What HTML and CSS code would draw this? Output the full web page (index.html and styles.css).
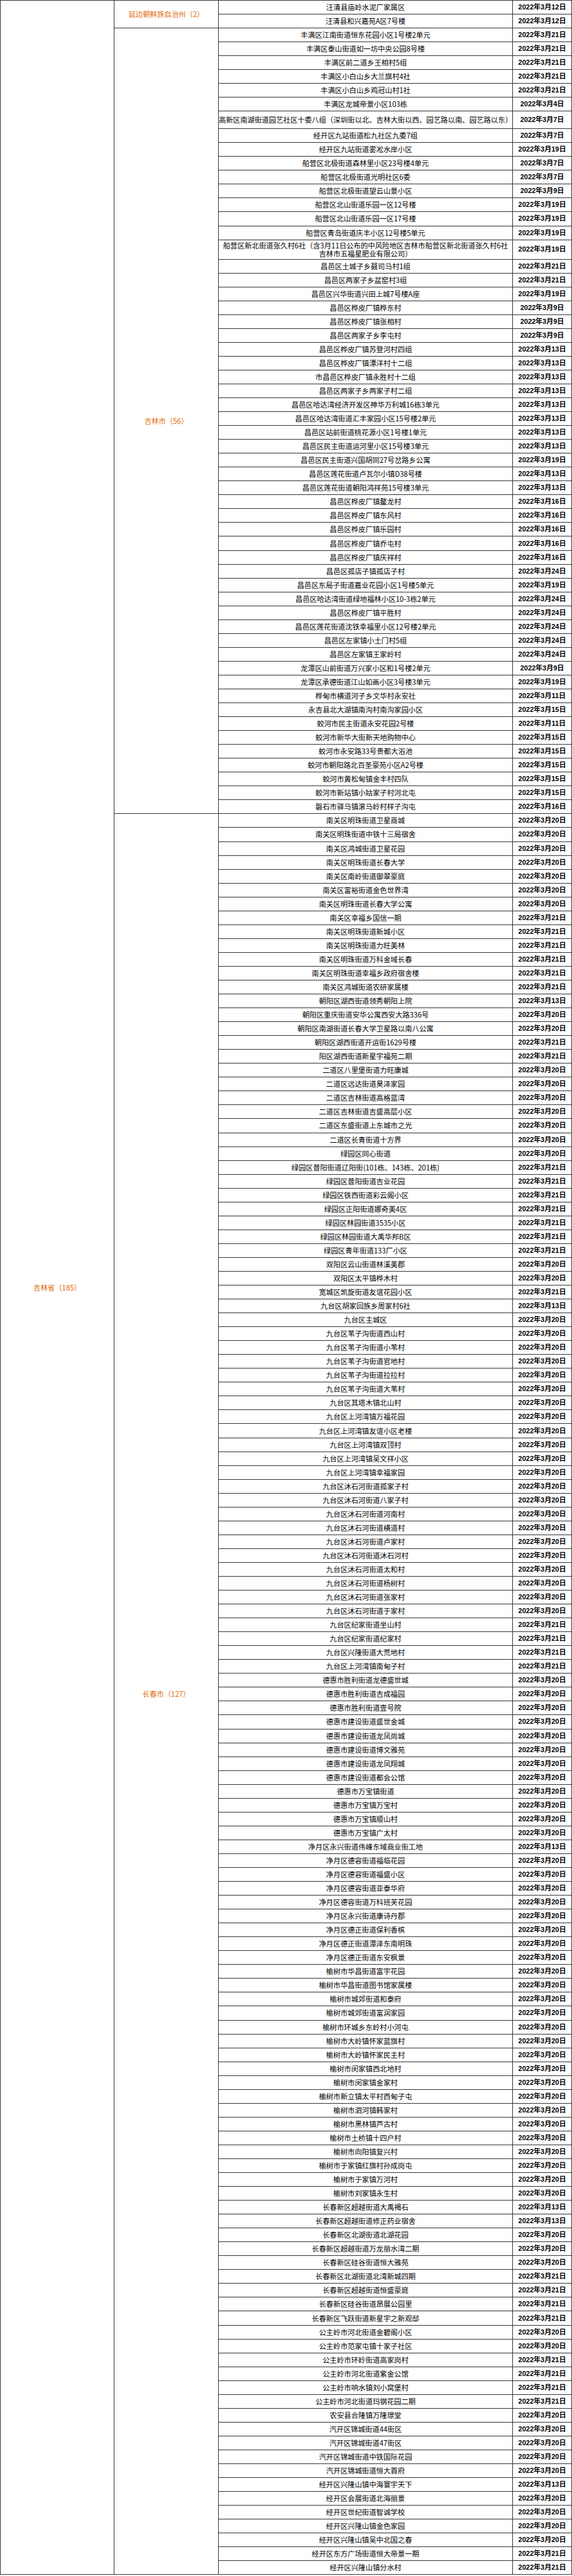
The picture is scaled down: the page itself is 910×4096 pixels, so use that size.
FILE: index.html
```html
<!DOCTYPE html>
<html lang="zh-CN">
<head>
<meta charset="utf-8">
<title>吉林省风险地区</title>
<link rel="stylesheet" href="styles.css">
</head>
<body>
<table class="sheet">
<colgroup><col class="c-prov"><col class="c-city"><col class="c-addr"><col class="c-date"></colgroup>
<tbody>
<tr><td class="label prov" rowspan="185">吉林省（185）</td><td class="label city-top" rowspan="2">延边朝鲜族自治州（2）</td><td>汪清县庙岭水泥厂家属区</td><td class="date">2022年3月12日</td></tr>
<tr><td>汪清县和兴嘉苑A区7号楼</td><td class="date">2022年3月12日</td></tr>
<tr><td class="label" rowspan="56">吉林市（56）</td><td>丰满区江南街道恒东花园小区1号楼2单元</td><td class="date">2022年3月21日</td></tr>
<tr><td>丰满区泰山街道如一坊中央公园8号楼</td><td class="date">2022年3月21日</td></tr>
<tr><td>丰满区前二道乡王相村5组</td><td class="date">2022年3月21日</td></tr>
<tr><td>丰满区小白山乡大兰旗村4社</td><td class="date">2022年3月21日</td></tr>
<tr><td>丰满区小白山乡鸡冠山村1社</td><td class="date">2022年3月21日</td></tr>
<tr><td>丰满区龙城帝景小区103栋</td><td class="date">2022年3月4日</td></tr>
<tr class="row-wide"><td class="nowrap">高新区南湖街道园艺社区十委八组（深圳街以北、吉林大街以西、园艺路以南、园艺路以东）</td><td class="date">2022年3月7日</td></tr>
<tr><td>经开区九站街道松九社区九委7组</td><td class="date">2022年3月7日</td></tr>
<tr><td>经开区九站街道雾凇水岸小区</td><td class="date">2022年3月19日</td></tr>
<tr><td>船营区北极街道森林里小区23号楼4单元</td><td class="date">2022年3月7日</td></tr>
<tr><td>船营区北极街道光明社区6委</td><td class="date">2022年3月7日</td></tr>
<tr><td>船营区北极街道望云山景小区</td><td class="date">2022年3月9日</td></tr>
<tr><td>船营区北山街道乐园一区12号楼</td><td class="date">2022年3月19日</td></tr>
<tr><td>船营区北山街道乐园一区17号楼</td><td class="date">2022年3月19日</td></tr>
<tr><td>船营区青岛街道庆丰小区12号楼5单元</td><td class="date">2022年3月19日</td></tr>
<tr class="row-double"><td>船营区新北街道张久村6社（含3月11日公布的中风险地区吉林市船营区新北街道张久村6社吉林市五福星肥业有限公司）</td><td class="date">2022年3月19日</td></tr>
<tr><td>昌邑区土城子乡聂司马村1组</td><td class="date">2022年3月21日</td></tr>
<tr><td>昌邑区两家子乡盆窑村3组</td><td class="date">2022年3月21日</td></tr>
<tr><td>昌邑区兴华街道兴田上城7号楼A座</td><td class="date">2022年3月19日</td></tr>
<tr><td>昌邑区桦皮厂镇桦东村</td><td class="date">2022年3月9日</td></tr>
<tr><td>昌邑区桦皮厂镇张相村</td><td class="date">2022年3月9日</td></tr>
<tr><td>昌邑区两家子乡李屯村</td><td class="date">2022年3月9日</td></tr>
<tr><td>昌邑区桦皮厂镇苏登河村四组</td><td class="date">2022年3月13日</td></tr>
<tr><td>昌邑区桦皮厂镇漂洋村十二组</td><td class="date">2022年3月13日</td></tr>
<tr><td>市昌邑区桦皮厂镇永胜村十二组</td><td class="date">2022年3月13日</td></tr>
<tr><td>昌邑区两家子乡两家子村二组</td><td class="date">2022年3月13日</td></tr>
<tr><td>昌邑区哈达湾经济开发区神华万利城16栋3单元</td><td class="date">2022年3月13日</td></tr>
<tr><td>昌邑区哈达湾街道汇丰家园小区15号楼2单元</td><td class="date">2022年3月13日</td></tr>
<tr><td>昌邑区站前街道桃花源小区1号楼1单元</td><td class="date">2022年3月13日</td></tr>
<tr><td>昌邑区民主街道运河里小区15号楼3单元</td><td class="date">2022年3月13日</td></tr>
<tr><td>昌邑区民主街道兴国胡同27号岔路乡公寓</td><td class="date">2022年3月19日</td></tr>
<tr><td>昌邑区莲花街道卢瓦尔小镇D38号楼</td><td class="date">2022年3月13日</td></tr>
<tr><td>昌邑区莲花街道朝阳鸿祥苑15号楼3单元</td><td class="date">2022年3月13日</td></tr>
<tr><td>昌邑区桦皮厂镇鳌龙村</td><td class="date">2022年3月16日</td></tr>
<tr><td>昌邑区桦皮厂镇东风村</td><td class="date">2022年3月16日</td></tr>
<tr><td>昌邑区桦皮厂镇乐园村</td><td class="date">2022年3月16日</td></tr>
<tr><td>昌邑区桦皮厂镇乔屯村</td><td class="date">2022年3月16日</td></tr>
<tr><td>昌邑区桦皮厂镇庆祥村</td><td class="date">2022年3月16日</td></tr>
<tr><td>昌邑区孤店子镇孤店子村</td><td class="date">2022年3月24日</td></tr>
<tr><td>昌邑区东局子街道嘉业花园小区1号楼5单元</td><td class="date">2022年3月19日</td></tr>
<tr><td>昌邑区哈达湾街道绿地福林小区10-3栋2单元</td><td class="date">2022年3月24日</td></tr>
<tr><td>昌邑区桦皮厂镇平胜村</td><td class="date">2022年3月24日</td></tr>
<tr><td>昌邑区莲花街道沈铁幸福里小区12号楼2单元</td><td class="date">2022年3月24日</td></tr>
<tr><td>昌邑区左家镇小土门村5组</td><td class="date">2022年3月24日</td></tr>
<tr><td>昌邑区左家镇王家岭村</td><td class="date">2022年3月24日</td></tr>
<tr><td>龙潭区山前街道万兴家小区和1号楼2单元</td><td class="date">2022年3月9日</td></tr>
<tr><td>龙潭区承德街道江山如画小区3号楼3单元</td><td class="date">2022年3月19日</td></tr>
<tr><td>桦甸市横道河子乡文华村永安社</td><td class="date">2022年3月11日</td></tr>
<tr><td>永吉县北大湖镇南沟村南沟家园小区</td><td class="date">2022年3月15日</td></tr>
<tr><td>蛟河市民主街道永安花园2号楼</td><td class="date">2022年3月11日</td></tr>
<tr><td>蛟河市新华大街新天地购物中心</td><td class="date">2022年3月15日</td></tr>
<tr><td>蛟河市永安路33号贵都大浴池</td><td class="date">2022年3月15日</td></tr>
<tr><td>蛟河市朝阳路北百圣豪苑小区A2号楼</td><td class="date">2022年3月15日</td></tr>
<tr><td>蛟河市黄松甸镇金丰村四队</td><td class="date">2022年3月15日</td></tr>
<tr><td>蛟河市新站镇小姑家子村河北屯</td><td class="date">2022年3月15日</td></tr>
<tr><td>磐石市驿马镇滚马岭村样子沟屯</td><td class="date">2022年3月16日</td></tr>
<tr><td class="label" rowspan="127">长春市（127）</td><td>南关区明珠街道卫星商城</td><td class="date">2022年3月20日</td></tr>
<tr><td>南关区明珠街道中铁十三局宿舍</td><td class="date">2022年3月20日</td></tr>
<tr><td>南关区鸿城街道卫星花园</td><td class="date">2022年3月20日</td></tr>
<tr><td>南关区明珠街道长春大学</td><td class="date">2022年3月20日</td></tr>
<tr><td>南关区南岭街道御翠豪庭</td><td class="date">2022年3月20日</td></tr>
<tr><td>南关区富裕街道金色世界湾</td><td class="date">2022年3月20日</td></tr>
<tr><td>南关区明珠街道长春大学公寓</td><td class="date">2022年3月20日</td></tr>
<tr><td>南关区幸福乡国信一期</td><td class="date">2022年3月21日</td></tr>
<tr><td>南关区明珠街道新城小区</td><td class="date">2022年3月21日</td></tr>
<tr><td>南关区明珠街道力旺美林</td><td class="date">2022年3月21日</td></tr>
<tr><td>南关区明珠街道万科金域长春</td><td class="date">2022年3月21日</td></tr>
<tr><td>南关区明珠街道幸福乡政府宿舍楼</td><td class="date">2022年3月21日</td></tr>
<tr><td>南关区鸿城街道农研家属楼</td><td class="date">2022年3月21日</td></tr>
<tr><td>朝阳区湖西街道领秀朝阳上院</td><td class="date">2022年3月13日</td></tr>
<tr><td>朝阳区重庆街道安华公寓西安大路336号</td><td class="date">2022年3月20日</td></tr>
<tr><td>朝阳区南湖街道长春大学卫星路以南八公寓</td><td class="date">2022年3月20日</td></tr>
<tr><td>朝阳区湖西街道开运街1629号楼</td><td class="date">2022年3月21日</td></tr>
<tr><td>阳区湖西街道新星宇福苑二期</td><td class="date">2022年3月21日</td></tr>
<tr><td>二道区八里堡街道力旺康城</td><td class="date">2022年3月20日</td></tr>
<tr><td>二道区远达街道昊泽家园</td><td class="date">2022年3月20日</td></tr>
<tr><td>二道区吉林街道高格蓝湾</td><td class="date">2022年3月20日</td></tr>
<tr><td>二道区吉林街道吉盛高层小区</td><td class="date">2022年3月20日</td></tr>
<tr><td>二道区东盛街道上东城市之光</td><td class="date">2022年3月20日</td></tr>
<tr><td>二道区长青街道十方界</td><td class="date">2022年3月20日</td></tr>
<tr><td>绿园区同心街道</td><td class="date">2022年3月20日</td></tr>
<tr><td>绿园区普阳街道辽阳街(101栋、143栋、201栋)</td><td class="date">2022年3月21日</td></tr>
<tr><td>绿园区普阳街道吉业花园</td><td class="date">2022年3月21日</td></tr>
<tr><td>绿园区铁西街道彩云阁小区</td><td class="date">2022年3月21日</td></tr>
<tr><td>绿园区正阳街道娜奇美4区</td><td class="date">2022年3月21日</td></tr>
<tr><td>绿园区林园街道3535小区</td><td class="date">2022年3月21日</td></tr>
<tr><td>绿园区林园街道大禹华邦B区</td><td class="date">2022年3月21日</td></tr>
<tr><td>绿园区青年街道133厂小区</td><td class="date">2022年3月21日</td></tr>
<tr><td>双阳区云山街道林溪美郡</td><td class="date">2022年3月20日</td></tr>
<tr><td>双阳区太平镇桦木村</td><td class="date">2022年3月20日</td></tr>
<tr><td>宽城区凯旋街道友谊花园小区</td><td class="date">2022年3月21日</td></tr>
<tr><td>九台区胡家回族乡周家村6社</td><td class="date">2022年3月13日</td></tr>
<tr><td>九台区主城区</td><td class="date">2022年3月20日</td></tr>
<tr><td>九台区苇子沟街道西山村</td><td class="date">2022年3月20日</td></tr>
<tr><td>九台区苇子沟街道小苇村</td><td class="date">2022年3月20日</td></tr>
<tr><td>九台区苇子沟街道官地村</td><td class="date">2022年3月20日</td></tr>
<tr><td>九台区苇子沟街道拉拉村</td><td class="date">2022年3月20日</td></tr>
<tr><td>九台区苇子沟街道大苇村</td><td class="date">2022年3月20日</td></tr>
<tr><td>九台区其塔木镇北山村</td><td class="date">2022年3月20日</td></tr>
<tr><td>九台区上河湾镇万福花园</td><td class="date">2022年3月20日</td></tr>
<tr><td>九台区上河湾镇友谊小区老楼</td><td class="date">2022年3月20日</td></tr>
<tr><td>九台区上河湾镇双顶村</td><td class="date">2022年3月20日</td></tr>
<tr><td>九台区上河湾镇吴文祥小区</td><td class="date">2022年3月20日</td></tr>
<tr><td>九台区上河湾镇幸福家园</td><td class="date">2022年3月20日</td></tr>
<tr><td>九台区沐石河街道孤家子村</td><td class="date">2022年3月20日</td></tr>
<tr><td>九台区沐石河街道八家子村</td><td class="date">2022年3月20日</td></tr>
<tr><td>九台区沐石河街道河南村</td><td class="date">2022年3月20日</td></tr>
<tr><td>九台区沐石河街道横道村</td><td class="date">2022年3月20日</td></tr>
<tr><td>九台区沐石河街道卢家村</td><td class="date">2022年3月20日</td></tr>
<tr><td>九台区沐石河街道沐石河村</td><td class="date">2022年3月20日</td></tr>
<tr><td>九台区沐石河街道太和村</td><td class="date">2022年3月20日</td></tr>
<tr><td>九台区沐石河街道杨树村</td><td class="date">2022年3月20日</td></tr>
<tr><td>九台区沐石河街道张家村</td><td class="date">2022年3月20日</td></tr>
<tr><td>九台区沐石河街道于家村</td><td class="date">2022年3月20日</td></tr>
<tr><td>九台区纪家街道坐山村</td><td class="date">2022年3月21日</td></tr>
<tr><td>九台区纪家街道纪家村</td><td class="date">2022年3月21日</td></tr>
<tr><td>九台区兴隆街道大荒地村</td><td class="date">2022年3月21日</td></tr>
<tr><td>九台区上河湾镇南甸子村</td><td class="date">2022年3月21日</td></tr>
<tr><td>德惠市胜利街道龙德盛世城</td><td class="date">2022年3月20日</td></tr>
<tr><td>德惠市胜利街道吉成福园</td><td class="date">2022年3月20日</td></tr>
<tr><td>德惠市胜利街道壹号院</td><td class="date">2022年3月20日</td></tr>
<tr><td>德惠市建设街道盛世金城</td><td class="date">2022年3月20日</td></tr>
<tr><td>德惠市建设街道龙凤尚城</td><td class="date">2022年3月20日</td></tr>
<tr><td>德惠市建设街道博文雅苑</td><td class="date">2022年3月20日</td></tr>
<tr><td>德惠市建设街道龙凤翔城</td><td class="date">2022年3月20日</td></tr>
<tr><td>德惠市建设街道都会公馆</td><td class="date">2022年3月20日</td></tr>
<tr><td>德惠市万宝镇街道</td><td class="date">2022年3月20日</td></tr>
<tr><td>德惠市万宝镇万宝村</td><td class="date">2022年3月20日</td></tr>
<tr><td>德惠市万宝镇顺山村</td><td class="date">2022年3月20日</td></tr>
<tr><td>德惠市万宝镇广太村</td><td class="date">2022年3月20日</td></tr>
<tr><td>净月区永兴街道伟峰东域商业街工地</td><td class="date">2022年3月13日</td></tr>
<tr><td>净月区德容街道福临花园</td><td class="date">2022年3月20日</td></tr>
<tr><td>净月区德容街道福盛小区</td><td class="date">2022年3月20日</td></tr>
<tr><td>净月区德容街道亚泰华府</td><td class="date">2022年3月20日</td></tr>
<tr><td>净月区德容街道万科班芙花园</td><td class="date">2022年3月20日</td></tr>
<tr><td>净月区永兴街道康诗丹郡</td><td class="date">2022年3月20日</td></tr>
<tr><td>净月区德正街道保利香槟</td><td class="date">2022年3月20日</td></tr>
<tr><td>净月区德正街道潭泽东南明珠</td><td class="date">2022年3月20日</td></tr>
<tr><td>净月区德正街道东安枫景</td><td class="date">2022年3月20日</td></tr>
<tr><td>榆树市华昌街道富宇花园</td><td class="date">2022年3月20日</td></tr>
<tr><td>榆树市华昌街道图书馆家属楼</td><td class="date">2022年3月20日</td></tr>
<tr><td>榆树市城郊街道和泰府</td><td class="date">2022年3月20日</td></tr>
<tr><td>榆树市城郊街道富润家园</td><td class="date">2022年3月20日</td></tr>
<tr><td>榆树市环城乡东岭村小河屯</td><td class="date">2022年3月20日</td></tr>
<tr><td>榆树市大岭镇怀家蓝旗村</td><td class="date">2022年3月20日</td></tr>
<tr><td>榆树市大岭镇怀家民主村</td><td class="date">2022年3月20日</td></tr>
<tr><td>榆树市闵家镇西北地村</td><td class="date">2022年3月20日</td></tr>
<tr><td>榆树市闵家镇金家村</td><td class="date">2022年3月20日</td></tr>
<tr><td>榆树市新立镇太平村西甸子屯</td><td class="date">2022年3月20日</td></tr>
<tr><td>榆树市泗河镇韩家村</td><td class="date">2022年3月20日</td></tr>
<tr><td>榆树市黑林镇芦古村</td><td class="date">2022年3月20日</td></tr>
<tr><td>榆树市土桥镇十四户村</td><td class="date">2022年3月20日</td></tr>
<tr><td>榆树市向阳镇复兴村</td><td class="date">2022年3月20日</td></tr>
<tr><td>榆树市于家镇红旗村孙成岗屯</td><td class="date">2022年3月20日</td></tr>
<tr><td>榆树市于家镇万河村</td><td class="date">2022年3月20日</td></tr>
<tr><td>榆树市刘家镇永生村</td><td class="date">2022年3月20日</td></tr>
<tr><td>长春新区超越街道大禹褐石</td><td class="date">2022年3月13日</td></tr>
<tr><td>长春新区超越街道修正药业宿舍</td><td class="date">2022年3月13日</td></tr>
<tr><td>长春新区北湖街道北湖花园</td><td class="date">2022年3月20日</td></tr>
<tr><td>长春新区超越街道万龙丽水湾二期</td><td class="date">2022年3月20日</td></tr>
<tr><td>长春新区硅谷街道恒大雅苑</td><td class="date">2022年3月20日</td></tr>
<tr><td>长春新区北湖街道北湾新城四期</td><td class="date">2022年3月21日</td></tr>
<tr><td>长春新区超越街道恒盛豪庭</td><td class="date">2022年3月21日</td></tr>
<tr><td>长春新区硅谷街道昂展公园里</td><td class="date">2022年3月21日</td></tr>
<tr><td>长春新区飞跃街道新星宇之新观邸</td><td class="date">2022年3月21日</td></tr>
<tr><td>公主岭市河北街道金碧阁小区</td><td class="date">2022年3月20日</td></tr>
<tr><td>公主岭市范家屯镇十家子社区</td><td class="date">2022年3月20日</td></tr>
<tr><td>公主岭市环岭街道高家岗村</td><td class="date">2022年3月21日</td></tr>
<tr><td>公主岭市河北街道紫金公馆</td><td class="date">2022年3月21日</td></tr>
<tr><td>公主岭市响水镇刘小窝堡村</td><td class="date">2022年3月21日</td></tr>
<tr><td>公主岭市河北街道玛钢花园二期</td><td class="date">2022年3月21日</td></tr>
<tr><td>农安县合隆镇万隆璟堂</td><td class="date">2022年3月20日</td></tr>
<tr><td>汽开区锦城街道44街区</td><td class="date">2022年3月20日</td></tr>
<tr><td>汽开区锦城街道47街区</td><td class="date">2022年3月20日</td></tr>
<tr><td>汽开区锦城街道中铁国际花园</td><td class="date">2022年3月20日</td></tr>
<tr><td>汽开区锦城街道恒大首府</td><td class="date">2022年3月20日</td></tr>
<tr><td>经开区兴隆山镇中海寰宇天下</td><td class="date">2022年3月13日</td></tr>
<tr><td>经开区会展街道北海丽景</td><td class="date">2022年3月20日</td></tr>
<tr><td>经开区世纪街道智诚学校</td><td class="date">2022年3月20日</td></tr>
<tr><td>经开区兴隆山镇金色家园</td><td class="date">2022年3月20日</td></tr>
<tr><td>经开区兴隆山镇吴中北国之春</td><td class="date">2022年3月20日</td></tr>
<tr><td>经开区东方广场街道恒大帝景一期</td><td class="date">2022年3月21日</td></tr>
<tr><td>经开区兴隆山镇分水村</td><td class="date">2022年3月21日</td></tr>
</tbody>
</table>
</body>
</html>
```

FILE: styles.css
```css
html, body {
  margin: 0;
  padding: 0;
  background: #ffffff;
}

.sheet {
  border-collapse: collapse;
  table-layout: fixed;
  width: 909px;
  font-family: "Noto Sans CJK SC", "Noto Sans", sans-serif;
  font-size: 11.4px;
  color: #000000;
}

.c-prov { width: 181px; }
.c-city { width: 166px; }
.c-addr { width: 468px; }
.c-date { width: 94px; }

.sheet tr {
  height: 22.05px;
}

.sheet td {
  border: 1px solid #333333;
  padding: 0 2px;
  text-align: center;
  vertical-align: middle;
  line-height: 13px;
  white-space: normal;
}

.sheet .row-wide { height: 27.8px; }
.sheet .row-double { height: 31px; }

.sheet td.nowrap {
  white-space: nowrap;
  overflow: visible;
  padding: 0;
}

.sheet td.date {
  font-family: "Liberation Sans", "Noto Sans CJK SC", sans-serif;
  font-weight: bold;
  font-size: 11px;
  white-space: nowrap;
}

.sheet td.label {
  color: #e26b0a;
  font-size: 11.4px;
}

.sheet td.city-top {
  vertical-align: middle;
}
```
